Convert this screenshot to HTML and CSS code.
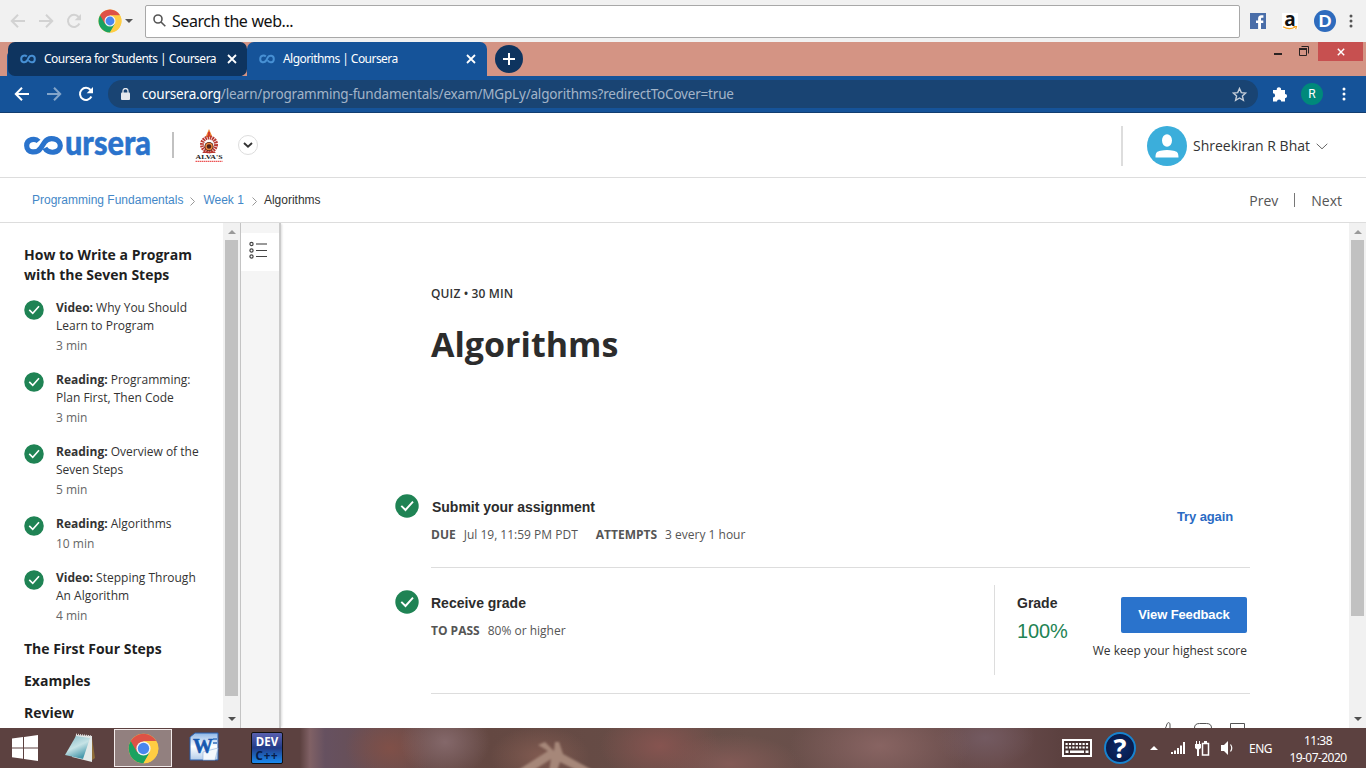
FILE: index.html
```html
<!DOCTYPE html>
<html lang="en">
<head>
<meta charset="utf-8">
<title>Algorithms | Coursera</title>
<link rel="stylesheet" href="styles.css">
</head>
<body>
<svg class="defs" width="0" height="0" aria-hidden="true">
  <defs>
    <symbol id="check" viewBox="0 0 24 24"><circle cx="12" cy="12" r="11.7" fill="#1f8354"/><path d="M6.3 11.8l4.2 4.2L18 7.6" fill="none" stroke="#fff" stroke-width="1.9"/></symbol>
    <symbol id="chrome" viewBox="0 0 48 48">
      <circle cx="24" cy="24" r="23" fill="#ffcd42"/>
      <path d="M24 24L4.1 12.5A23 23 0 0 0 24 47L34 29.8z" fill="#1aa261"/>
      <path d="M24 24L14 29.8 4.1 12.5A23 23 0 0 1 43.9 12.5H24z" fill="#de5246"/>
      <path d="M24 13.5h20.4A23 23 0 0 1 24 47l9.2-16z" fill="#ffcd42"/>
      <circle cx="24" cy="24" r="11" fill="#f4f4f4"/><circle cx="24" cy="24" r="8.8" fill="#4a87ee"/>
    </symbol>
    <symbol id="back" viewBox="0 0 16 16"><path d="M15 8H2M8 1.8L1.8 8 8 14.2" fill="none" stroke="currentColor" stroke-width="2"/></symbol>
    <symbol id="forward" viewBox="0 0 16 16"><path d="M1 8h13M8 1.8L14.2 8 8 14.2" fill="none" stroke="currentColor" stroke-width="2"/></symbol>
    <symbol id="reload" viewBox="0 0 16 16"><path d="M13.4 10.5A6 6 0 1 1 12.6 4" fill="none" stroke="currentColor" stroke-width="2"/><path d="M15 1v6.3H8.7z" fill="currentColor"/></symbol>
    <symbol id="loop" viewBox="0 0 16 10"><path d="M6.8 2.5C5.3 1 1.2 1 1.2 5s4.3 4.2 6.1 1.4l1.4-2.8C10.3.8 14.8.8 14.8 5s-4.6 4.2-6.1 1.4" fill="none" stroke="currentColor" stroke-width="2"/></symbol>
    <symbol id="close" viewBox="0 0 10 10"><path d="M1 1l8 8M9 1L1 9" stroke="#fff" stroke-width="1.8"/></symbol>
  </defs>
</svg>

<div class="launcher">
  <svg class="nav-icon"><use href="#back"/></svg>
  <svg class="nav-icon"><use href="#forward"/></svg>
  <svg class="nav-icon"><use href="#reload"/></svg>
  <svg class="launcher-chrome"><use href="#chrome"/></svg>
  <svg class="launcher-caret" viewBox="0 0 8 4"><path d="M0 0h8L4 4z" fill="#555"/></svg>
  <div class="search">
    <svg width="13" height="13" viewBox="0 0 13 13" fill="none" stroke="#555" stroke-width="1.6"><circle cx="5" cy="5" r="4"/><path d="M8 8l4.3 4.3"/></svg>
    <span>Search the web...</span>
  </div>
  <svg class="app-fb" viewBox="0 0 16 16"><rect width="16" height="16" fill="#4a6ea9"/><path d="M11 16V10h2.3V7.4H11V5.9c0-.8.3-1.2 1.2-1.2h1.2V2.2h-2C9 2.2 8.1 3.5 8.1 5.400v2H6V10h2.100v6z" fill="#fff"/></svg>
  <div class="app-amazon"><b>a</b><svg viewBox="0 0 16 4"><path d="M1 .8Q7.500 4.500 13 1M11.500.5l3-.1-.8 2.700" fill="none" stroke="#f7a11a" stroke-width="1.200"/></svg></div>
  <div class="app-d"><b>D</b></div>
  <svg class="dots dark" viewBox="0 0 4 14"><circle cx="2" cy="2" r="1.500"/><circle cx="2" cy="7" r="1.500"/><circle cx="2" cy="12" r="1.500"/></svg>
</div>

<div class="tabstrip">
  <div class="tab inactive"><svg class="fav"><use href="#loop"/></svg><span class="title">Coursera for Students | Coursera</span><svg class="x"><use href="#close"/></svg></div>
  <div class="tab active"><svg class="fav"><use href="#loop"/></svg><span class="title short">Algorithms | Coursera</span><svg class="x"><use href="#close"/></svg></div>
  <div class="new-tab"><svg width="12" height="12" viewBox="0 0 12 12"><path d="M6 0v12M0 6h12" stroke="#fff" stroke-width="2"/></svg></div>
  <div class="window-controls">
    <svg class="minimize" viewBox="0 0 8 2"><rect width="8" height="2" fill="#2b2322"/></svg>
    <svg class="restore" viewBox="0 0 10 10" fill="none" stroke="#2b2322"><path d="M2.500.5h7v7"/><path d="M.5 3h7v6.500h-7z"/><path d="M0 3h8" stroke-width="2"/></svg>
    <div class="win-close"><svg width="8" height="8" viewBox="0 0 10 10"><use href="#close"/></svg></div>
  </div>
</div>

<div class="toolbar">
  <svg class="nav-icon"><use href="#back"/></svg>
  <svg class="nav-icon dim"><use href="#forward"/></svg>
  <svg class="nav-icon"><use href="#reload"/></svg>
  <div class="address">
    <svg width="10" height="13" viewBox="0 0 10 13"><rect y="4.500" width="9" height="7.500" rx="1" fill="#e4e8ed"/><path d="M2 5V3a2.500 2.500 0 0 1 5 0v2" fill="none" stroke="#e4e8ed" stroke-width="1.300"/></svg>
    <span class="url"><em>coursera.org</em>/learn/programming-fundamentals/exam/MGpLy/algorithms?redirectToCover=true</span>
    <svg class="star" viewBox="0 0 15 15"><path d="M7.500 1.500l1.800 4.100 4.400.4-3.300 2.900 1 4.400-3.900-2.300-3.900 2.300 1-4.400L1.300 6l4.400-.4z" fill="none" stroke="#c5ced9" stroke-width="1.400"/></svg>
  </div>
  <svg class="puzzle" viewBox="0 0 16 16"><path d="M1 4h3.800a2.200 2.200 0 1 1 4.200 0H13v4a2.100 2.100 0 1 1 0 4.200V15.500H9.200a2.100 2.100 0 0 0-4.200 0H1v-4a2.100 2.100 0 0 0 0-4.200z" fill="#fff"/></svg>
  <div class="profile">R</div>
  <svg class="dots light" viewBox="0 0 4 14"><circle cx="2" cy="2" r="1.500"/><circle cx="2" cy="7" r="1.500"/><circle cx="2" cy="12" r="1.500"/></svg>
</div>

<header class="site-header">
  <svg class="logo" viewBox="0 0 136 60" fill="#2a73cc">
    <path d="M14.500 26.400C11.500 23 2.700 23.600 2.700 30.800c0 7.400 10.300 8.200 14.200 2l3.600-5.400C24.500 21.400 36.300 23 36.300 30.800c0 7.600-12.300 8.600-15.400 2.200" fill="none" stroke="#2a73cc" stroke-width="5.200"/>
    <text x="41" y="39.500" textLength="86" lengthAdjust="spacingAndGlyphs">ursera</text>
  </svg>
  <div class="logo-rule"></div>
  <svg class="alvas" viewBox="0 0 28 34">
    <path d="M14 0l3.500 8h-7z" fill="#ee8130"/>
    <path d="M14 3v4" stroke="#d13c2c" stroke-width="2"/>
    <circle cx="14" cy="15.500" r="7" fill="none" stroke="#b93830" stroke-width="4" stroke-dasharray="1.700 .7"/>
    <circle cx="14" cy="17.500" r="4.500" fill="#4c241d"/><circle cx="14" cy="17.500" r="3" fill="none" stroke="#ed873f" stroke-width="1.400"/>
    <path d="M9 22.500h10l2 1.500H7z" fill="#b93830"/>
    <text x="0.500" y="30" textLength="27" lengthAdjust="spacingAndGlyphs">ALVA'S</text>
    <path d="M.5 32.300h27" stroke="#ec5656" stroke-width="1.200" stroke-dasharray="1.500 .5"/>
  </svg>
  <div class="round-caret"><svg width="10" height="6" viewBox="0 0 10 6"><path d="M1 1l4 3.700L9 1" fill="none" stroke="#333" stroke-width="1.900"/></svg></div>
  <div class="user">
    <svg width="40" height="40" viewBox="0 0 40 40"><circle cx="20" cy="20" r="20" fill="#3baedb"/><ellipse cx="20" cy="14.500" rx="5" ry="6.200" fill="#fff"/><path d="M8.500 31.500c0-5 1.500-6 5-6.700q6.500-1.400 13 0c3.500.7 5 1.700 5 6.700z" fill="#fff"/></svg>
    <span>Shreekiran R Bhat</span>
    <svg class="user-caret" viewBox="0 0 12 7"><path d="M.7.800L6 5.800 11.300.8" fill="none" stroke="#666"/></svg>
  </div>
</header>

<nav class="crumbs">
  <a class="c1">Programming Fundamentals</a><svg class="sep" viewBox="0 0 5 9"><path d="M.5.500l4 4-4 4" fill="none" stroke="#999"/></svg><a class="c2">Week 1</a><svg class="sep second" viewBox="0 0 5 9"><path d="M.5.500l4 4-4 4" fill="none" stroke="#999"/></svg><span class="c3">Algorithms</span>
  <div class="pager"><span>Prev</span><i></i><span>Next</span></div>
</nav>

<div class="content">
  <aside class="sidebar">
    <h3 class="lead">How to Write a Program<br>with the Seven Steps</h3>
    <div class="item"><svg><use href="#check"/></svg><div><p><b>Video:</b> Why You Should<br>Learn to Program</p><small>3 min</small></div></div>
    <div class="item"><svg><use href="#check"/></svg><div><p><b>Reading:</b> Programming:<br>Plan First, Then Code</p><small>3 min</small></div></div>
    <div class="item"><svg><use href="#check"/></svg><div><p><b>Reading:</b> Overview of the<br>Seven Steps</p><small>5 min</small></div></div>
    <div class="item"><svg><use href="#check"/></svg><div><p><b>Reading:</b> Algorithms</p><small>10 min</small></div></div>
    <div class="item"><svg><use href="#check"/></svg><div><p><b>Video:</b> Stepping Through<br>An Algorithm</p><small>4 min</small></div></div>
    <h3>The First Four Steps</h3>
    <h3>Examples</h3>
    <h3>Review</h3>
  </aside>
  <div class="scroll side-scroll"><svg viewBox="0 0 8 4"><path d="M0 4h8L4 0z" fill="#999"/></svg><div class="thumb"></div><svg viewBox="0 0 8 4"><path d="M0 0h8L4 4z" fill="#505050"/></svg></div>
  <div class="rail"><div class="rail-tab"><svg width="18" height="18" viewBox="0 0 18 18" fill="none" stroke="#444"><circle cx="2.500" cy="3" r="1.600" stroke-width="1.200"/><circle cx="2.500" cy="9.500" r="1.600" stroke-width="1.200"/><circle cx="2.500" cy="15.500" r="1.600" stroke-width="1.200"/><path d="M7 9.500h11M7 15.500h11"/><path d="M7 3h11" stroke="#999" stroke-width="2"/></svg></div></div>
  <main class="main">
    <div class="kind">QUIZ • 30 MIN</div>
    <h1>Algorithms</h1>
    <section class="step submit">
      <svg class="step-check"><use href="#check"/></svg>
      <div class="step-body">
        <h2 class="h-submit">Submit your assignment</h2>
        <p class="meta"><b>DUE</b><span>Jul 19, 11:59 PM PDT</span><b class="att">ATTEMPTS</b><span>3 every 1 hour</span></p>
      </div>
      <a class="again">Try again</a>
    </section>
    <section class="step receive">
      <svg class="step-check"><use href="#check"/></svg>
      <div class="step-body">
        <h2>Receive grade</h2>
        <p class="meta"><b>TO PASS</b><span>80% or higher</span></p>
      </div>
      <div class="grade"><h2>Grade</h2><strong>100%</strong></div>
      <div class="feedback"><button>View Feedback</button><p>We keep your highest score</p></div>
    </section>
    <div class="reactions">
      <svg width="12" height="18" viewBox="0 0 12 18"><path d="M0 12C3 9 5 6 6 2c1-2 3-2 3 1v4"/></svg>
      <svg width="18" height="18" viewBox="0 0 18 18"><path d="M.5 6q0-4.500 5-4.500h7q5 0 5 4.500v6H.5z"/></svg>
      <svg width="15" height="18" viewBox="0 0 15 18"><path d="M.5 17V1.500h14V17L7.500 10z"/></svg>
    </div>
  </main>
  <div class="scroll main-scroll"><svg viewBox="0 0 8 4"><path d="M0 4h8L4 0z" fill="#999"/></svg><div class="thumb"></div><svg viewBox="0 0 8 4"><path d="M0 0h8L4 4z" fill="#505050"/></svg></div>
</div>

<footer class="taskbar">
  <div class="wallpaper"></div>
  <svg class="figure" viewBox="0 0 90 40"><defs><filter id="slight"><feGaussianBlur stdDeviation="1"/></filter></defs><path d="M28 17l7-3 9 9 1-9h4l4 12 33 18H70l-20-10-3 9h-8l2-12-20 13H5l33-21z" fill="#a68779" filter="url(#slight)"/></svg>
  <svg class="windows" viewBox="0 0 26 26"><path d="M0 3.600l11-1.500v10.300H0zM12 2L26 0v12.400H12zM0 13.400h11v10.300L0 22.200zM12 13.400h14V26l-14-2z" fill="#fff"/></svg>
  <svg class="notepad" viewBox="0 0 31 30"><defs><linearGradient id="pad" x2=".5" y2="1"><stop stop-color="#7fb8c5"/><stop offset=".55" stop-color="#c6e3e6"/><stop offset="1" stop-color="#4798ab"/></linearGradient></defs><path d="M27 5l3 20-4 3z" fill="#8f6d38"/><path d="M11 2l16 1v26l-20-5z" fill="#e3e9e8"/><path d="M11 3l14 2-7 21L0 22z" fill="url(#pad)"/><path d="M11 1.500l16 2" stroke="#ddd" stroke-width="2" stroke-dasharray="1 1"/></svg>
  <div class="task-active"><svg><use href="#chrome"/></svg></div>
  <svg class="word" viewBox="0 0 30 30"><defs><linearGradient id="wd" y2="1" x2="0"><stop stop-color="#8db6e8"/><stop offset=".5" stop-color="#fff"/><stop offset="1" stop-color="#b4cdea"/></linearGradient></defs><path d="M1 5L6 1h23v27H1z" fill="url(#wd)" stroke="#2961ae"/><path d="M24 7h4M24 11h4" stroke="#5b8ccb" stroke-width="2"/><path d="M14 20l15-4-3 12H14z" fill="#f4f8fc" stroke="#90b4da" stroke-width=".6"/><text x="4" y="21" textLength="20" lengthAdjust="spacingAndGlyphs">W</text></svg>
  <div class="devcpp"><b>DEV</b><span>C++</span></div>
  <svg class="keyboard" viewBox="0 0 30 18"><rect x="1" y="1" width="28" height="16" fill="#43302f" stroke="#fff" stroke-width="2"/><path d="M3.500 5h23M3.500 8.500h23" stroke="#fff" stroke-width="2.200" stroke-dasharray="2.200 1.200"/><path d="M3.500 12.800h3M8 12.800h14M23.500 12.800h3" stroke="#fff" stroke-width="2.400"/></svg>
  <div class="help">?</div>
  <svg class="tray-caret" viewBox="0 0 8 4"><path d="M0 4h8L4 0z" fill="#fff"/></svg>
  <svg class="signal" viewBox="0 0 15 12" fill="#fff"><path d="M0 10h2v2H0zM3 8.500h2V12H3zM6 6h2v6H6zM9 3.500h2V12H9zM12 0h2v12h-2z"/></svg>
  <svg class="battery" viewBox="0 0 15 15"><rect x="7.500" y="2.500" width="6" height="11.500" fill="none" stroke="#fff" stroke-width="1.500"/><path d="M9 0h3v2H9zM0 3h6v4L4 8.500V15H2V8.500L0 7zM1 0h1v3H1zM4 0h1v3H4z" fill="#fff"/></svg>
  <svg class="volume" viewBox="0 0 12 14"><path d="M0 4h3l4-4v14l-4-4H0z" fill="#fff"/><path d="M9.500 3.500q2.500 3.500 0 7" fill="none" stroke="#fff" stroke-width="1.200"/></svg>
  <span class="lang">ENG</span>
  <div class="clock"><span>11:38</span><span>19-07-2020</span></div>
</footer>
</body>
</html>
```
FILE: styles.css
```css
* { box-sizing: border-box; }
body { margin: 0; width: 1366px; height: 768px; overflow: hidden; display: flex; flex-direction: column; background: #fff; color: #333; font-family: "Open Sans", "Noto Sans", sans-serif; font-size: 12px; white-space: nowrap; }
body > div, header, nav, footer { flex-shrink: 0; }
svg { display: block; flex-shrink: 0; }
h1, h2, h3, p { margin: 0; }
.defs { position: absolute; }
.nav-icon { width: 16px; height: 16px; }
.dots { width: 4px; height: 14px; margin-left: auto; }
.dots.dark { fill: #555; }
.dots.light { fill: #fff; }

/* Launcher bar */
.launcher { height: 42px; background: #f1f1f1; display: flex; align-items: center; padding: 0 13px 0 10px; color: #d2d2d2; }
.launcher .nav-icon { margin-right: 12px; }
.launcher-chrome { width: 24px; height: 24px; margin-left: 4px; }
.launcher-caret { width: 8px; height: 4px; margin: 0 12px 0 3px; }
.search { width: 1095px; height: 33px; background: #fff; border: 1px solid #a8a8a8; border-radius: 2px; display: flex; align-items: center; gap: 6px; padding-left: 7px; color: #111; font: 16px "Noto Sans", sans-serif; letter-spacing: -.45px; word-spacing: .4px; }
.search svg { margin-bottom: 2px; }
.search span { margin-top: -1px; }
.app-fb { width: 16px; height: 16px; margin-left: 10px; }
.app-amazon { width: 16px; height: 16px; margin-left: 16px; background: #fff; color: #111; text-align: center; }
.app-amazon b { display: block; height: 13px; font: bold 19px/13px "Open Sans", sans-serif; }
.app-amazon svg { width: 16px; height: 4px; }
.app-d { width: 22px; height: 22px; margin-left: 16px; border-radius: 50%; background: #2e6bbd; color: #fff; display: grid; place-items: center; }
.app-d b { font: 900 17px/18px Lato, sans-serif; }

/* Tabs */
.tabstrip { height: 34px; background: #d49484; display: flex; padding-left: 8px; color: #fff; }
.tab { display: flex; align-items: center; height: 34px; padding: 0 10px 0 12px; border-radius: 7px 7px 0 0; font: 12px "Noto Sans", sans-serif; }
.tab.inactive { width: 239px; background: #0e345f; border-radius: 7px; box-shadow: -3px 7px 0 -2px #155399; }
.tab.active { width: 240px; background: #155399; padding-right: 11px; }
.fav { width: 16px; height: 10px; color: #4790d4; }
.title { margin: -1px 0 0 8px; letter-spacing: -.49px; }
.title.short { letter-spacing: -.55px; }
.x { width: 10px; height: 10px; margin-left: auto; }
.new-tab { width: 28px; height: 28px; margin: 3px 0 0 8px; border-radius: 50%; background: #0e345f; display: grid; place-items: center; }
.window-controls { display: flex; margin-left: auto; padding-right: 3px; }
.minimize { width: 8px; height: 2px; margin: 11px 17px 0 0; }
.restore { width: 10px; height: 10px; margin: 4px 9px 0 0; }
.win-close { width: 45px; height: 19px; background: #c75050; display: grid; place-items: center; }

/* Address bar */
.toolbar { height: 37px; background: #155399; border-bottom: 1px solid #123e70; display: flex; align-items: center; padding: 0 20px 0 14px; color: #fff; }
.toolbar .nav-icon { margin-right: 16px; }
.toolbar .dim { color: #83a5ca; }
.address { width: 1150px; height: 28px; margin-left: -2px; border-radius: 14px; background: #194473; display: flex; align-items: center; padding: 0 11px 0 13px; }
.url { margin-left: 11px; font: 13.5px "Noto Sans", sans-serif; color: #a3b4c8; letter-spacing: -.185px; }
.url em { font-style: normal; color: #fff; }
.star { width: 15px; height: 15px; margin-left: auto; }
.puzzle { width: 16px; height: 16px; margin-left: 14px; }
.profile { width: 22px; height: 22px; margin-left: 13px; border-radius: 50%; background: #00897b; text-align: center; font: 12px/22px Roboto, sans-serif; }

/* Site header */
.site-header { height: 65px; border-bottom: 1px solid #ddd; display: flex; align-items: center; padding: 0 38px 0 24px; }
.logo { width: 136px; height: 60px; }
.logo text { font: 900 35px Lato, sans-serif; stroke: #2a73cc; stroke-width: .5px; }
.logo-rule { width: 2px; height: 26px; margin-left: 12px; background: #c1c1c1; }
.alvas { width: 28px; height: 34px; margin: 1px 0 0 21px; }
.alvas text { font: bold 7px "Liberation Serif", serif; fill: #222; }
.round-caret { width: 20px; height: 20px; margin-left: 15px; border: 1px solid #ddd; border-radius: 50%; display: grid; place-items: center; }
.user { margin: 2px 0 0 auto; height: 40px; padding-left: 24px; border-left: 2px solid #ddd; display: flex; align-items: center; }
.user span { width: 117px; margin: -2px 0 0 6px; font-size: 14px; }
.user-caret { width: 12px; height: 7px; margin-left: 6px; }

/* Breadcrumbs */
.crumbs { height: 45px; border-bottom: 1px solid #ddd; display: flex; align-items: center; padding: 0 24px 1px 32px; font: 12px "Liberation Sans", Arial, sans-serif; }
.crumbs a { color: #4387c7; }
.sep { width: 5px; height: 9px; margin: 3px 7px 0; }
.sep.second { margin-left: 8px; }
.sep + .c2 { margin-left: 1px; }
.pager { margin-left: auto; display: flex; align-items: center; padding-top: 1px; color: #555; font: 14px "Open Sans", sans-serif; }
.pager i { width: 1px; height: 14px; margin: 0 16px; background: #777; }

/* Course outline */
.content { height: 505px; display: flex; overflow: hidden; }
.sidebar { width: 223px; padding: 22px 0 0 24px; overflow: hidden; }
h3 { font-size: 14px; line-height: 20px; color: #1f1f1f; margin-bottom: 12px; }
.lead { margin-bottom: 14px; }
.item { display: flex; gap: 12px; margin-bottom: 16px; }
.item svg { width: 20px; height: 20px; margin-top: 1px; }
.item p { line-height: 18px; }
.item small { display: block; margin-top: 2px; font-size: 12px; line-height: 18px; color: #666; }
.item + h3 { margin-top: -2px; }
.scroll { width: 17px; background: #f1f1f1; display: flex; flex-direction: column; align-items: center; flex-shrink: 0; }
.scroll svg { width: 8px; height: 4px; margin: 7px 0 6px; }
.scroll svg:last-child { margin: auto 0 7px; }
.thumb { width: 13px; background: #c1c1c1; }
.side-scroll .thumb { height: 456px; }
.main-scroll .thumb { height: 376px; }
.rail { width: 39px; flex-shrink: 0; border-left: 1px solid #c4c4c4; background: #f5f5f5; box-shadow: 2px 0 0 #cbcbcb, 4px 0 2px -1px #ddd; padding-top: 10px; z-index: 1; }
.rail-tab { height: 38px; background: #fff; padding: 8px 0 0 8px; }

/* Quiz cover page */
.main { flex: 1; padding: 61px 99px 0 116px; }
.kind { padding-left: 36px; font-weight: 600; line-height: 20px; letter-spacing: .13px; }
h1 { padding-left: 36px; margin-top: 15px; font-size: 34px; line-height: 50px; color: #2c2c2c; }
.step { display: flex; }
.step-check { width: 24px; height: 24px; }
.step-body { flex: 1; margin-left: 12px; }
h2 { font: bold 14px/20px "Liberation Sans", Arial, sans-serif; color: #2c2c2c; }
.h-submit { padding-left: 1px; letter-spacing: -.02px; }
.meta { margin-top: 8px; line-height: 20px; color: #555; display: flex; }
.meta span { margin-left: 8px; }
.meta .att { margin-left: 18px; }
.submit { margin-top: 125px; height: 96px; }
.submit .step-body { height: 74px; padding-top: 3px; border-bottom: 1px solid #ddd; }
.again { width: 73px; height: 74px; border-bottom: 1px solid #ddd; padding-top: 13px; font: bold 13px/20px "Liberation Sans", Arial, sans-serif; letter-spacing: -.12px; color: #2a6bc4; }
.receive { height: 104px; }
.receive .step-body { padding-top: 3px; border-bottom: 1px solid #ddd; }
.grade { width: 88px; margin-top: -5px; border-bottom: 1px solid #ddd; padding-top: 8px; background: linear-gradient(#ddd, #ddd) 0 0 / 1px 90px no-repeat; }
.grade h2, .grade strong { padding-left: 23px; display: block; }
.grade strong { font: 20px/24px "Liberation Sans", Arial, sans-serif; letter-spacing: -.1px; color: #1f8354; margin-top: 6px; }
.feedback { width: 168px; padding-right: 3px; border-bottom: 1px solid #ddd; display: flex; flex-direction: column; align-items: flex-end; }
.feedback button { width: 126px; height: 36px; margin-top: 7px; padding: 0 0 1px; border: 0; border-radius: 2px; background: #2a73cc; color: #fff; font: bold 13px "Liberation Sans", Arial, sans-serif; letter-spacing: -.12px; }
.feedback p { margin-top: 8px; line-height: 20px; }
.reactions { display: flex; justify-content: flex-end; gap: 18px; padding: 28px 5px 0 0; fill: none; stroke: #555; }
.reactions svg:first-child { margin-right: 3px; }

/* Windows taskbar */
.taskbar { height: 40px; display: flex; align-items: center; padding-right: 19px; background: #5c4140; color: #fff; position: relative; overflow: hidden; }
.wallpaper { position: absolute; left: 300px; top: 0; width: 760px; height: 40px; background:
  radial-gradient(ellipse 45px 36px at 145px 14px, #84686a, transparent),
  radial-gradient(ellipse 45px 35px at 90px 20px, #805048, transparent),
  radial-gradient(ellipse 50px 30px at 240px 28px, #805a50, transparent),
  radial-gradient(ellipse 60px 38px at 360px 18px, #865450, transparent),
  radial-gradient(ellipse 70px 30px at 430px 36px, #835a56, transparent),
  radial-gradient(ellipse 90px 50px at 580px 18px, #886462, transparent),
  radial-gradient(ellipse 50px 30px at 685px 10px, #735a61, transparent),
  linear-gradient(90deg, #5c4140, #806165 10px, #665160 25px, #6a4d4c 100px, #644842 190px, #69504a 450px, #694c4c 700px, #5c4140); }
.figure { position: absolute; left: 510px; top: 0; width: 90px; height: 40px; }
.taskbar > :not(.wallpaper):not(.figure) { position: relative; flex-shrink: 0; }
.windows { width: 26px; height: 26px; margin-left: 12px; }
.notepad { width: 31px; height: 30px; margin-left: 27px; }
.task-active { width: 58px; height: 38px; margin-left: 18px; border: 1px solid #f2eaea; background: #92807f; display: grid; place-items: center; }
.task-active svg { width: 31px; height: 31px; }
.word { width: 30px; height: 30px; margin: -3px 0 0 17px; }
.word text { font: bold 20px "Liberation Serif", serif; fill: #1758b0; stroke: #1758b0; stroke-width: .6px; }
.devcpp { width: 32px; height: 32px; margin-left: 32px; border: 1px solid #111; border-radius: 2px; background: linear-gradient(#5960af, #223c89 50%, #198af0); display: grid; grid-template-rows: 15px 15px; justify-items: center; }
.devcpp b { font: bold 11.5px/18px "Noto Sans", sans-serif; }
.devcpp span { color: #081c48; font: bold 11.5px/16px "Noto Sans", sans-serif; letter-spacing: .8px; }
.keyboard { width: 30px; height: 18px; margin-left: auto; }
.help { width: 32px; height: 32px; margin-left: 12px; border-radius: 50%; border: 2px solid #1783cf; background: radial-gradient(#0b2b6b, #071540); text-align: center; font: bold 27px/28px "Noto Sans", sans-serif; }
.tray-caret { width: 8px; height: 4px; margin-left: 14px; }
.signal { width: 15px; height: 12px; margin-left: 13px; }
.battery { width: 15px; height: 15px; margin-left: 9px; }
.volume { width: 12px; height: 14px; margin-left: 11px; }
.lang { width: 24px; margin-left: 16px; font: 12px "Noto Sans", sans-serif; letter-spacing: -.5px; }
.clock { width: 58px; margin: 1px 0 0 16px; display: grid; justify-items: center; font: 12px/17px "Noto Sans", sans-serif; letter-spacing: -.55px; }
```
